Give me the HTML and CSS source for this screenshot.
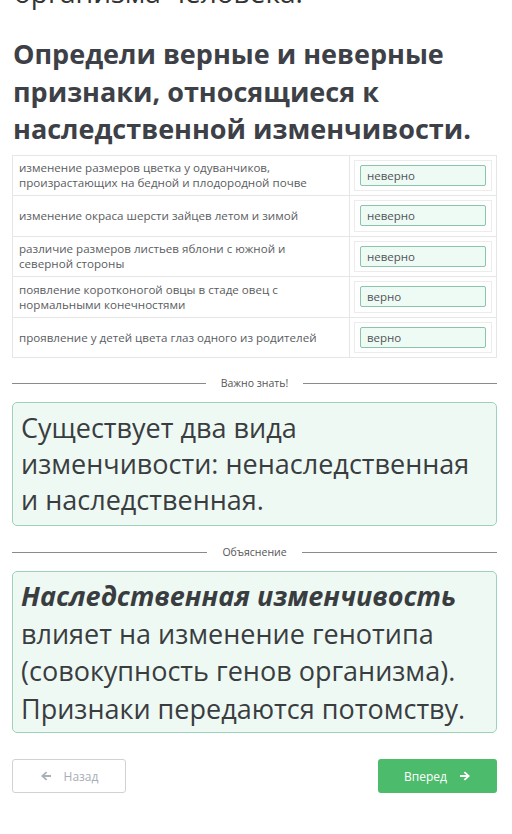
FILE: index.html
```html
<!DOCTYPE html>
<html lang="ru">
<head>
<meta charset="utf-8">
<link rel="stylesheet" href="styles.css">
</head>
<body>
<div class="page">
  <p class="prev">организма человека.</p>
  <h1 class="title">Определи верные и неверные признаки, относящиеся к наследственной изменчивости.</h1>
  <div class="table">
    <div class="row"><div class="cell-text">изменение размеров цветка у одуванчиков, произрастающих на бедной и плодородной почве</div><div class="cell-ans"><div class="slot"><div class="answer">неверно</div></div></div></div>
    <div class="row"><div class="cell-text">изменение окраса шерсти зайцев летом и зимой</div><div class="cell-ans"><div class="slot"><div class="answer">неверно</div></div></div></div>
    <div class="row"><div class="cell-text">различие размеров листьев яблони с южной и северной стороны</div><div class="cell-ans"><div class="slot"><div class="answer">неверно</div></div></div></div>
    <div class="row"><div class="cell-text">появление коротконогой овцы в стаде овец с нормальными конечностями</div><div class="cell-ans"><div class="slot"><div class="answer">верно</div></div></div></div>
    <div class="row"><div class="cell-text">проявление у детей цвета глаз одного из родителей</div><div class="cell-ans"><div class="slot"><div class="answer">верно</div></div></div></div>
  </div>
  <div class="divider"><span>Важно знать!</span></div>
  <div class="note">Существует два вида изменчивости: ненаследственная и наследственная.</div>
  <div class="divider divider2"><span>Объяснение</span></div>
  <div class="note note2"><b><i>Наследственная изменчивость</i></b> влияет на изменение генотипа (совокупность генов организма). Признаки передаются потомству.</div>
  <div class="nav">
    <button class="btn back"><svg width="12" height="12" viewBox="0 0 12 12"><path d="M1 6 L6 1.5 L7.3 2.8 L4.6 5 H11 V7 H4.6 L7.3 9.2 L6 10.5 Z" fill="#a9b0b8"/></svg><span>Назад</span></button>
    <button class="btn next"><span>Вперед</span><svg width="12" height="12" viewBox="0 0 12 12"><path d="M11 6 L6 1.5 L4.7 2.8 L7.4 5 H1 V7 H7.4 L4.7 9.2 L6 10.5 Z" fill="#ffffff"/></svg></button>
  </div>
</div>
</body>
</html>
```

FILE: styles.css
```css
html, body { margin: 0; padding: 0; background: #fff; }
body { font-family: "Open Sans", "Noto Sans", sans-serif; color: #3b3f44; }
.page { padding: 0 15px 0 12px; overflow: hidden; height: 834px; box-sizing: border-box; }
.prev { margin: -26px 0 0 2px; font-size: 28px; line-height: 36px; color: #333; }
.title { margin: 25px 0 0 1px; font-size: 27px; line-height: 37.5px; font-weight: 700; color: #3d4147; }
.table { margin-top: 7px; border: 1px solid #e6e6e6; border-bottom: none; }
.row { display: flex; border-bottom: 1px solid #e6e6e6; height: 39.5px; }
.cell-text { flex: 0 0 318px; border-right: 1px solid #e6e6e6; padding: 0 12px 0 6px; display: flex; align-items: center; font-size: 11.6px; line-height: 15px; color: #5a5d61; }
.cell-ans { flex: 1; padding: 4px 4px; display: flex; }
.slot { flex: 1; border: 1px solid #ececec; padding: 4px 5px; display: flex; align-items: center; }
.answer { flex: 1; height: 19px; border: 1px solid #8cc3ac; border-radius: 2px; background: #eefaf4; font-size: 11.5px; line-height: 19px; padding-left: 6px; color: #505458; }
.divider { display: flex; align-items: center; margin-top: 18px; font-size: 10.5px; color: #555; }
.divider::before, .divider::after { content: ""; flex: 1; height: 1px; background: #8a8a8a; }
.divider span { padding: 0 15px; }
.divider2 { margin-top: 19px; }
.note { margin-top: 12px; border: 1px solid #9fd0bb; border-radius: 5px; background: #eef9f4; padding: 7px 8px 7px 8px; font-size: 27px; line-height: 36px; color: #3a3d40; }
.note2 { margin-top: 12px; padding: 5px 8px 5px 8px; line-height: 37.5px; }
.note2 b { color: #3a3d40; }
.nav { display: flex; justify-content: space-between; margin-top: 26px; }
.btn { height: 34px; border-radius: 3px; font-family: "Open Sans", sans-serif; font-size: 12px; display: flex; align-items: center; justify-content: center; gap: 12px; padding: 0; }
.back { width: 114px; background: #fff; border: 1px solid #cfd3d7; color: #a7aeb6; }
.next { width: 119px; background: #4cbc6c; border: none; color: #fff; }
```
